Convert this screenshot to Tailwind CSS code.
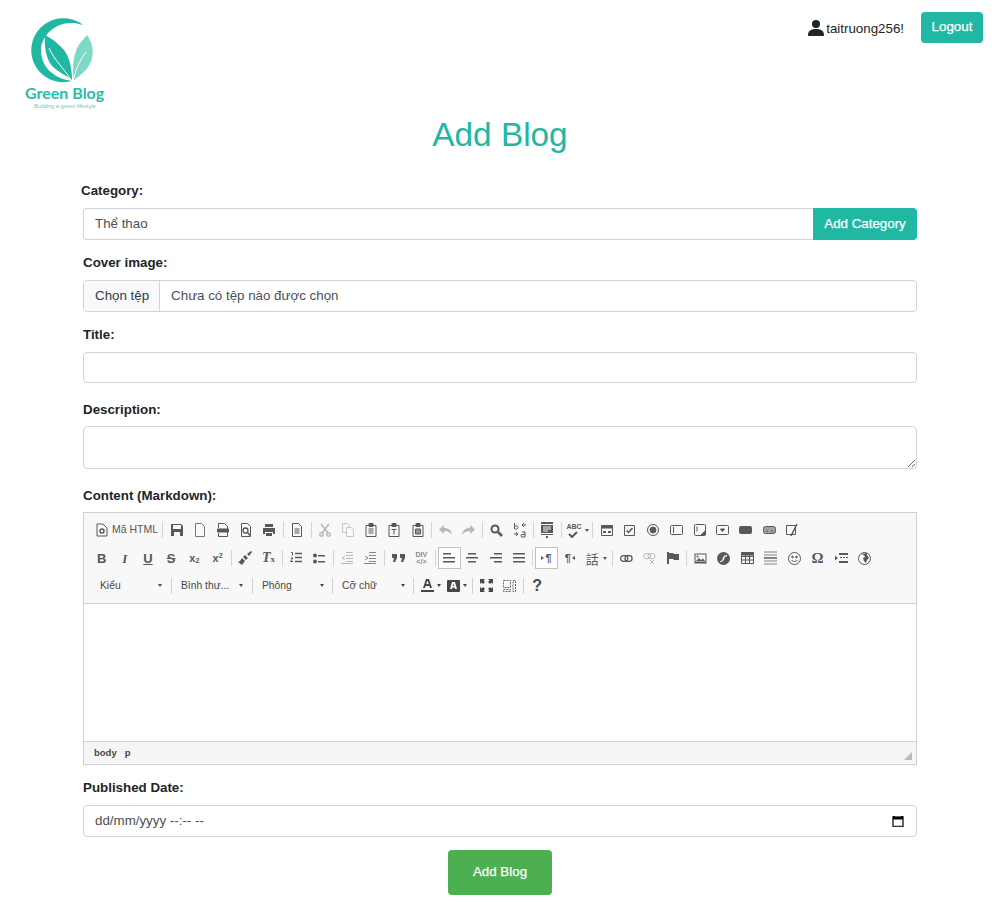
<!DOCTYPE html>
<html lang="vi">

<head>
    <meta charset="UTF-8" />
    <meta name="viewport" content="width=device-width, initial-scale=1.0" />
    <title>Add Blog</title>
    <script src="https://cdn.jsdelivr.net/npm/@tailwindcss/browser@4"></script>
</head>

<body class="bg-white text-[#212529] font-['Liberation_Sans',Arial,sans-serif] text-[13.33px]">
    <!-- header -->
    <header class="flex justify-between h-[112px]">
        <div class="ml-[25px] mt-[17px] w-[82px]">
            <svg width="80" height="68" viewBox="25 17 80 68" class="block">
                <path d="M83 25 A32 32 0 1 0 72 81 C52 78 41 66 41 50 C41 34 60 17 83 25Z" fill="#20b8a3" />
                <path d="M45 35 C51 38 58 43 64 50 C70 58 72 70 72 80 C66 75 58 72 52 66 C46 59 44 46 45 35Z" fill="#20b8a3" />
                <path d="M87 35 C92 42 94 50 92 58 C90 68 82 74 74 80 C72 70 73 56 78 46 C81 42 84 38 87 35Z" fill="#7ed8c8" />
                <path d="M49 48 C54 60 64 68 71 80" fill="none" stroke="#fff" stroke-width="1" />
                <path d="M86 52 C80 60 76 68 74 78" fill="none" stroke="#fff" stroke-width="1" />
            </svg>
            <div class="font-['Lato',sans-serif] font-bold text-[16px] leading-[18px] text-[#2bbca9] whitespace-nowrap -mt-[1px]">Green Blog</div>
            <div class="text-[5.7px] leading-[7px] text-[#5fcdbd] whitespace-nowrap ml-[9px] mt-[1px]">Building a green lifestyle</div>
        </div>
        <div class="flex items-start mr-[13px] mt-[12px]">
            <div class="flex items-center mt-[6px] mr-[17px]">
                <svg width="16" height="16" viewBox="0 0 16 16" fill="#212529">
                    <circle cx="8" cy="4" r="4" />
                    <path d="M0 15 C0 11 3 9 8 9 C13 9 16 11 16 15 C16 15.6 15.6 16 15 16 H1 C.4 16 0 15.6 0 15Z" />
                </svg>
                <span class="ml-[2px] mt-[1px]">taitruong256!</span>
            </div>
            <button class="bg-[#20b8a3] text-white [-webkit-text-stroke:0.25px_white] w-[62px] h-[31px] rounded-[4px] pb-[2px]">Logout</button>
        </div>
    </header>

    <h1 class="text-center text-[#20b8a3] text-[33.33px] leading-[40px] mt-[3px] pl-[4px]">Add Blog</h1>

    <form class="mx-[83px] w-[834px]" onsubmit="return false">
        <label class="block font-bold leading-[20px] mt-[26px] -ml-[2px]">Category:</label>
        <div class="flex mt-[7px] h-[32px]">
            <input value="Thể thao" readonly class="flex-1 border border-[#ced4da] border-r-0 rounded-l-[4px] px-[11px] text-[#495057] outline-none" />
            <button class="w-[104px] bg-[#20b8a3] text-white [-webkit-text-stroke:0.25px_white] rounded-r-[4px]">Add Category</button>
        </div>

        <label class="block font-bold leading-[20px] mt-[13px]">Cover image:</label>
        <div class="flex mt-[7px] h-[32px] border border-[#ced4da] rounded-[4px] overflow-hidden text-[#495057]">
            <span class="flex items-center pl-[11px] pr-[10px] bg-[#f8f9fa] border-r border-[#ced4da] text-[#343a40]">Chọn tệp</span>
            <span class="flex items-center px-[11px]">Chưa có tệp nào được chọn</span>
        </div>

        <label class="block font-bold leading-[20px] mt-[13px]">Title:</label>
        <input class="block w-full h-[31px] mt-[7px] border border-[#ced4da] rounded-[4px] outline-none" />

        <label class="block font-bold leading-[20px] mt-[17px]">Description:</label>
        <textarea class="block w-full h-[43px] mt-[6px] border border-[#ced4da] rounded-[4px] outline-none"></textarea>

        <label class="block font-bold leading-[20px] mt-[17px]">Content (Markdown):</label>

        <!-- editor -->
        <div class="mt-[6px] border border-[#d1d1d1] h-[253px] flex flex-col">
            <div class="h-[91px] bg-[#f8f8f8] border-b border-[#d1d1d1] pl-[6px] pt-[3px] text-[#474747]">
                <!-- row 1 -->
                <div class="flex items-center h-[28px] opacity-90">
                    <span class="w-[24px] flex justify-center"><svg width="12" height="14" viewBox="0 0 12 14" fill="none" stroke="#474747"><path d="M1 1h6l4 4v8H1z" /><circle cx="6" cy="8" r="2" stroke-width="1.5" /></svg></span>
                    <span class="w-[47px] text-[10.5px] text-[#474747] -ml-[2px] whitespace-nowrap">Mã HTML</span>
                    <i class="w-[1px] h-[16px] bg-[#d1d1d1] mx-[2px] ml-[3px]"></i>
                    <span class="w-[23.2px] flex justify-center"><svg width="14" height="14" viewBox="0 0 14 14" fill="#474747"><path d="M1 1h10l2 2v10H1zM3 2v4h8V2zM4 9v4h6V9z" fill-rule="evenodd" /></svg></span>
                    <span class="w-[23.2px] flex justify-center"><svg width="12" height="14" viewBox="0 0 12 14" fill="none" stroke="#666"><path d="M1.500 .5h6l3 3v10h-9z" /></svg></span>
                    <span class="w-[23.2px] flex justify-center"><svg width="12" height="14" viewBox="0 0 12 14" fill="none" stroke="#474747"><path d="M1.500 5V.5h6l3 3V13.500h-9V10" /><path d="M.5 6h11v3H.5z" fill="#474747" /></svg></span>
                    <span class="w-[23.2px] flex justify-center"><svg width="12" height="14" viewBox="0 0 12 14" fill="none" stroke="#474747"><path d="M1.500 .5h6l3 3v10h-9z" /><circle cx="5.500" cy="7.500" r="2.500" stroke-width="1.300" /><path d="M7.500 9.500l2.500 3" stroke-width="1.500" /></svg></span>
                    <span class="w-[23.2px] flex justify-center"><svg width="14" height="14" viewBox="0 0 14 14" fill="#474747"><path d="M3 1h8v3H3zM1 5h12v6h-2V9H3v2H1zM4 10h6v3H4z" /></svg></span>
                    <i class="w-[1px] h-[16px] bg-[#d1d1d1] mx-[1.8px]"></i>
                    <span class="w-[23.2px] flex justify-center"><svg width="12" height="14" viewBox="0 0 12 14" fill="none" stroke="#474747"><path d="M1.500 .5h6l3 3v10h-9zM3.500 6h5M3.500 8h5M3.500 10h5" /></svg></span>
                    <i class="w-[1px] h-[16px] bg-[#d1d1d1] mx-[1.8px]"></i>
                    <span class="w-[23.2px] flex justify-center opacity-40"><svg width="12" height="14" viewBox="0 0 12 14" fill="none" stroke="#474747" stroke-width="1.500"><path d="M2 1l7 9M10 1L3 10" /><circle cx="2.500" cy="11.500" r="1.700" /><circle cx="9.500" cy="11.500" r="1.700" /></svg></span>
                    <span class="w-[23.2px] flex justify-center opacity-30"><svg width="14" height="14" viewBox="0 0 14 14" fill="#fff" stroke="#474747"><path d="M1.500 .5h5l2 2v7h-7z" /><path d="M5.500 4.500h5l2 2v7h-7z" /></svg></span>
                    <span class="w-[23.2px] flex justify-center"><svg width="12" height="14" viewBox="0 0 12 14" fill="none" stroke="#474747"><path d="M1 2.500h10v11H1zM3.500 6h5M3.500 8h5M3.500 10h5" /><path d="M4 .5h4v3H4z" fill="#474747" /></svg></span>
                    <span class="w-[23.2px] flex justify-center"><svg width="12" height="14" viewBox="0 0 12 14" fill="none" stroke="#474747"><path d="M1 2.500h10v11H1zM3.500 6.500h5M6 6.500v5" /><path d="M4 .5h4v3H4z" fill="#474747" /></svg></span>
                    <span class="w-[23.2px] flex justify-center"><svg width="12" height="14" viewBox="0 0 12 14" fill="none" stroke="#474747"><path d="M1 2.500h10v11H1z" /><path d="M3.500 6h5v5h-5z" fill="#888" /><path d="M4 .5h4v3H4z" fill="#474747" /></svg></span>
                    <i class="w-[1px] h-[16px] bg-[#d1d1d1] mx-[1.8px]"></i>
                    <span class="w-[23.2px] flex justify-center opacity-40"><svg width="13" height="10" viewBox="0 0 13 10" fill="#474747"><path d="M5 0v3c5 0 7 2 8 7-2-3-4-4-8-4v3L0 4.500z" /></svg></span>
                    <span class="w-[23.2px] flex justify-center opacity-40"><svg width="13" height="10" viewBox="0 0 13 10" fill="#474747"><path d="M8 0v3C3 3 1 5 0 10c2-3 4-4 8-4v3l5-4.500z" /></svg></span>
                    <i class="w-[1px] h-[16px] bg-[#d1d1d1] mx-[1.8px]"></i>
                    <span class="w-[23.2px] flex justify-center"><svg width="13" height="13" viewBox="0 0 13 13" fill="none" stroke="#474747"><circle cx="5" cy="5" r="3.500" stroke-width="2" /><path d="M8 8l4 4" stroke-width="2.500" /></svg></span>
                    <span class="w-[23.2px] flex justify-center"><svg width="14" height="16" viewBox="0 0 14 16" fill="none" stroke="#474747"><path d="M1.500 1v6M1.500 4.500c2-1.500 3.500-.5 3.500 1s-2 2.500-3.500 1M9 3h4M9 3l2-2M9 3l2 2M1 12h4M5 12l-2-2M5 12l-2 2M9 10h3v5h-3c-1.500 0-1.500-2.500 0-2.500h3" /></svg></span>
                    <i class="w-[1px] h-[16px] bg-[#d1d1d1] mx-[1.8px]"></i>
                    <span class="w-[23.2px] flex justify-center"><svg width="12" height="16" viewBox="0 0 12 16" fill="#474747"><path d="M0 0h12v2H0zM0 3h12v8H0zM0 12h12v1H0zM5 14h2v2H5z" /><path d="M2 5h8M2 7h8M2 9h5" stroke="#f8f8f8" /></svg></span>
                    <i class="w-[1px] h-[16px] bg-[#d1d1d1] mx-[1.8px]"></i>
                    <span class="w-[21px] flex justify-center items-center"><span class="text-[7px] font-bold leading-[8px] relative"><span class="relative -top-[3px]">ABC</span><svg width="10" height="7" viewBox="0 0 10 7" fill="none" stroke="#474747" stroke-width="2" class="absolute left-[2px] top-[5px]"><path d="M1 3l3 3 5-5" /></svg></span></span>
                    <i class="w-0 h-0 border-x-[2px] border-x-transparent border-t-[3px] border-t-[#474747] mr-[2px]"></i>
                    <i class="w-[1px] h-[16px] bg-[#d1d1d1] mx-[1.8px]"></i>
                    <span class="w-[23.2px] flex justify-center"><svg width="12" height="11" viewBox="0 0 12 11" fill="none" stroke="#474747"><path d="M.5.5h11v10H.5z" /><path d="M.5 1h11v2H.5z" fill="#474747" /><path d="M2 6h3v2H2zM7 6h3v2H7z" fill="#474747" stroke="none" /></svg></span>
                    <span class="w-[23.2px] flex justify-center"><svg width="11" height="11" viewBox="0 0 11 11" fill="none" stroke="#474747"><path d="M.5.5h10v10H.5z" /><path d="M2.500 5.500l2 2 4-4.500" stroke-width="1.500" /></svg></span>
                    <span class="w-[23.2px] flex justify-center"><svg width="12" height="12" viewBox="0 0 12 12" fill="none" stroke="#474747"><circle cx="6" cy="6" r="5.500" /><circle cx="6" cy="6" r="3" fill="#474747" /></svg></span>
                    <span class="w-[23.2px] flex justify-center"><svg width="13" height="10" viewBox="0 0 13 10" fill="none" stroke="#474747"><rect x=".5" y=".5" width="12" height="9" rx="1" /><path d="M3.500 2v6" /></svg></span>
                    <span class="w-[23.2px] flex justify-center"><svg width="12" height="12" viewBox="0 0 12 12" fill="none" stroke="#474747"><rect x=".5" y=".5" width="11" height="11" rx="1" /><path d="M3 2.500v5" /><path d="M11 7v4H7z" fill="#474747" /></svg></span>
                    <span class="w-[23.2px] flex justify-center"><svg width="13" height="10" viewBox="0 0 13 10" fill="none" stroke="#474747"><rect x=".5" y=".5" width="12" height="9" rx="1" /><path d="M4.500 4h4L6.500 6.500z" fill="#474747" /></svg></span>
                    <span class="w-[23.2px] flex justify-center"><svg width="13" height="8" viewBox="0 0 13 8" fill="#474747"><rect width="13" height="8" rx="2" /></svg></span>
                    <span class="w-[23.2px] flex justify-center"><svg width="13" height="8" viewBox="0 0 13 8" fill="none" stroke="#474747"><rect x=".5" y=".5" width="12" height="7" rx="2" fill="#999" /><path d="M3 5h2M8 5h2" /></svg></span>
                    <span class="w-[23.2px] flex justify-center"><svg width="13" height="14" viewBox="0 0 13 14" fill="none" stroke="#474747"><path d="M.5 2.500h9v9h-9z" /><path d="M5 13L11 1" stroke-width="1.500" /></svg></span>
                </div>
                <!-- row 2 -->
                <div class="flex items-center h-[28px] opacity-90">
                    <span class="w-[23.2px] text-center font-bold text-[13px] leading-none">B</span>
                    <span class="w-[23.2px] text-center italic font-bold text-[13px] leading-none font-['Liberation_Serif',serif]">I</span>
                    <span class="w-[23.2px] text-center font-bold text-[13px] leading-none underline">U</span>
                    <span class="w-[23.2px] text-center font-bold text-[13px] leading-none line-through">S</span>
                    <span class="w-[23.2px] text-center font-bold text-[11px] leading-none">x<sub class="text-[7px]">2</sub></span>
                    <span class="w-[23.2px] text-center font-bold text-[11px] leading-none">x<sup class="text-[7px]">2</sup></span>
                    <i class="w-[1px] h-[16px] bg-[#d1d1d1] mx-[1.8px]"></i>
                    <span class="w-[23.2px] flex justify-center"><svg width="14" height="14" viewBox="0 0 14 14" fill="#474747"><path d="M9 3l4-3 1 1-3 4zM7 4l3 3-2 2-3-3zM4 7l3 3-3 4-4-3 2-1z" /></svg></span>
                    <span class="w-[23.2px] text-center italic font-bold text-[14px] leading-none font-['Liberation_Serif',serif]">T<span class="text-[9px] not-italic">x</span></span>
                    <i class="w-[1px] h-[16px] bg-[#d1d1d1] mx-[1.8px]"></i>
                    <span class="w-[23.2px] flex justify-center"><svg width="12" height="12" viewBox="0 0 12 12" fill="none" stroke="#474747"><path d="M5 1.500h7M5 5.500h7M5 9.500h7" stroke-width="1.500" /><path d="M1 .5h1.500v3M.5 6h2.500L.5 9.500H3" /></svg></span>
                    <span class="w-[23.2px] flex justify-center"><svg width="12" height="11" viewBox="0 0 12 11" fill="#474747"><circle cx="2" cy="2.500" r="2" /><circle cx="2" cy="8.500" r="2" /><path d="M5 2h7v1.500H5zM5 8h7v1.500H5z" /></svg></span>
                    <i class="w-[1px] h-[16px] bg-[#d1d1d1] mx-[1.8px]"></i>
                    <span class="w-[23.2px] flex justify-center opacity-40"><svg width="12" height="12" viewBox="0 0 12 12" fill="none" stroke="#474747"><path d="M5 .5h7M5 3.500h7M5 6.500h7M5 9.500h7M0 11.500h12M4 4L1 6l3 2" /></svg></span>
                    <span class="w-[23.2px] flex justify-center opacity-70"><svg width="12" height="12" viewBox="0 0 12 12" fill="none" stroke="#474747"><path d="M5 .5h7M5 3.500h7M5 6.500h7M5 9.500h7M0 11.500h12M1 4l3 2-3 2" /></svg></span>
                    <i class="w-[1px] h-[16px] bg-[#d1d1d1] mx-[1.8px]"></i>
                    <span class="w-[23.2px] flex justify-center"><svg width="13" height="8" viewBox="0 0 13 8" fill="#474747"><path d="M0 0h5v4L3 8H1l1-4H0zM8 0h5v4l-2 4H9l1-4H8z" /></svg></span>
                    <span class="w-[23.2px] text-center font-bold text-[7px] leading-[7px] opacity-70">DIV<br />&lt;/&gt;</span>
                    <i class="w-[1px] h-[16px] bg-[#d1d1d1] mx-[1.8px]"></i>
                    <span class="w-[23.2px] h-[22px] flex items-center justify-center bg-white border border-[#bcbcbc]"><svg width="12" height="10" viewBox="0 0 12 10" fill="#474747"><path d="M0 0h8v1.500H0zM0 4h12v1.500H0zM0 8h12v1.500H0z" /></svg></span>
                    <span class="w-[23.2px] flex justify-center"><svg width="12" height="10" viewBox="0 0 12 10" fill="#474747"><path d="M2 0h8v1.500H2zM0 4h12v1.500H0zM2 8h8v1.500H2z" /></svg></span>
                    <span class="w-[23.2px] flex justify-center"><svg width="12" height="10" viewBox="0 0 12 10" fill="#474747"><path d="M4 0h8v1.500H4zM0 4h12v1.500H0zM4 8h8v1.500H4z" /></svg></span>
                    <span class="w-[23.2px] flex justify-center"><svg width="12" height="10" viewBox="0 0 12 10" fill="#474747"><path d="M0 0h12v1.500H0zM0 4h12v1.500H0zM0 8h12v1.500H0z" /></svg></span>
                    <i class="w-[1px] h-[16px] bg-[#d1d1d1] mx-[1.8px]"></i>
                    <span class="w-[23.2px] h-[22px] flex items-center justify-center bg-white border border-[#bcbcbc] text-[11px] font-bold leading-none"><i class="w-0 h-0 border-y-[2px] border-y-transparent border-l-[3px] border-l-[#474747] mr-[1px]"></i>¶</span>
                    <span class="w-[23.2px] flex items-center justify-center text-[11px] font-bold leading-none">¶<i class="w-0 h-0 border-y-[2px] border-y-transparent border-r-[3px] border-r-[#474747] ml-[1px]"></i></span>
                    <span class="w-[22px] text-center text-[13px] leading-none font-['Noto_Sans_CJK_TC',sans-serif]">話</span>
                    <i class="w-0 h-0 border-x-[2px] border-x-transparent border-t-[3px] border-t-[#474747] mr-[3px]"></i>
                    <i class="w-[1px] h-[16px] bg-[#d1d1d1] mx-[1.8px]"></i>
                    <span class="w-[23.2px] flex justify-center"><svg width="13" height="7" viewBox="0 0 13 7" fill="none" stroke="#474747" stroke-width="1.300"><rect x=".7" y=".7" width="7" height="5.600" rx="2.500" /><rect x="5" y=".7" width="7" height="5.600" rx="2.500" /></svg></span>
                    <span class="w-[23.2px] flex justify-center opacity-40"><svg width="13" height="11" viewBox="0 0 13 11" fill="none" stroke="#474747"><rect x=".7" y=".7" width="7" height="5" rx="2.500" /><rect x="5" y=".7" width="7" height="5" rx="2.500" /><path d="M7 7l4 4M11 7l-4 4" /></svg></span>
                    <span class="w-[23.2px] flex justify-center"><svg width="12" height="12" viewBox="0 0 12 12" fill="#474747"><path d="M0 0h2v12H0zM2 1h4l1 1h5v6H7L6 7H2z" /></svg></span>
                    <i class="w-[1px] h-[16px] bg-[#d1d1d1] mx-[1.8px]"></i>
                    <span class="w-[23.2px] flex justify-center"><svg width="13" height="11" viewBox="0 0 13 11" fill="#474747"><path d="M.5.500h12v10H.5zM1.500 1.500v7h10v-7z" fill-rule="evenodd" /><path d="M2 8l3-3 2 2 2-1.500L11 8z" /><circle cx="3.500" cy="3.500" r="1" /></svg></span>
                    <span class="w-[23.2px] flex justify-center"><svg width="13" height="13" viewBox="0 0 13 13" fill="#474747"><circle cx="6.500" cy="6.500" r="6.500" /><path d="M10 3C7 3 6 5 5.500 7S4 9 3 9v1c3 0 4-2 4.500-4S9 4.500 10 4.500z" fill="#f8f8f8" /></svg></span>
                    <span class="w-[23.2px] flex justify-center"><svg width="13" height="12" viewBox="0 0 13 12" fill="none" stroke="#474747"><path d="M.5.500h12v11H.5zM.5 4.500h12M.5 8h12M4.500 3v9M8.500 3v9" /><path d="M.5 1h12v2H.5z" fill="#474747" /></svg></span>
                    <span class="w-[23.6px] flex justify-center"><svg width="13" height="14" viewBox="0 0 13 14" fill="none" stroke="#777"><path d="M0 1h13M0 4h13M0 10h13M0 13h13" /><path d="M0 7h13" stroke-width="2" /></svg></span>
                    <span class="w-[23.6px] flex justify-center"><svg width="13" height="13" viewBox="0 0 13 13" fill="none" stroke="#474747"><circle cx="6.500" cy="6.500" r="6" /><path d="M3.500 8c1.500 2 4.500 2 6 0" /><circle cx="4.500" cy="5" r=".8" fill="#474747" /><circle cx="8.500" cy="5" r=".8" fill="#474747" /></svg></span>
                    <span class="w-[23.6px] text-center text-[15px] font-bold leading-none font-['Liberation_Serif',serif]">Ω</span>
                    <span class="w-[23.6px] flex justify-center"><svg width="13" height="10" viewBox="0 0 13 10" fill="#474747"><path d="M0 2.500L3 5 0 7.500zM4 0h9v2H4zM5 4h2v1H5zM8 4h2v1H8zM11 4h2v1h-2zM4 8h9v2H4z" /></svg></span>
                    <span class="w-[23.6px] flex justify-center"><svg width="13" height="13" viewBox="0 0 13 13" fill="none" stroke="#474747"><circle cx="6.500" cy="6.500" r="6" /><path d="M3 2l3 1 1 2-2 1 1 3 2 2 1-3 2-2-2-3V1z" fill="#474747" stroke="none" /></svg></span>
                </div>
                <!-- row 3 -->
                <div class="flex items-center h-[27px] text-[10.3px] text-[#474747]">
                    <span class="w-[81px] flex items-center pl-[10px] whitespace-nowrap">Kiểu<i class="w-0 h-0 border-x-[2px] border-x-transparent border-t-[3px] border-t-[#474747] ml-auto mr-[9px]"></i></span>
                    <i class="w-[1px] h-[16px] bg-[#d1d1d1]"></i>
                    <span class="w-[80px] flex items-center pl-[9px] whitespace-nowrap">Bình thư...<i class="w-0 h-0 border-x-[2px] border-x-transparent border-t-[3px] border-t-[#474747] ml-auto mr-[9px]"></i></span>
                    <i class="w-[1px] h-[16px] bg-[#d1d1d1]"></i>
                    <span class="w-[79px] flex items-center pl-[9px] whitespace-nowrap">Phông<i class="w-0 h-0 border-x-[2px] border-x-transparent border-t-[3px] border-t-[#474747] ml-auto mr-[8px]"></i></span>
                    <i class="w-[1px] h-[16px] bg-[#d1d1d1]"></i>
                    <span class="w-[80px] flex items-center pl-[9px] whitespace-nowrap">Cỡ chữ<i class="w-0 h-0 border-x-[2px] border-x-transparent border-t-[3px] border-t-[#474747] ml-auto mr-[8px]"></i></span>
                    <i class="w-[1px] h-[16px] bg-[#d1d1d1]"></i>
                    <span class="w-[20px] flex items-center justify-end"><svg width="13" height="14" viewBox="0 0 13 14" fill="#474747"><path d="M5 0h3l3 9H9l-.6-2H4.600L4 9H2zM5.200 5h2.600L6.500 1.500zM0 11h13v2H0z" fill-rule="evenodd" /></svg></span>
                    <i class="w-0 h-0 border-x-[2px] border-x-transparent border-t-[3px] border-t-[#474747] ml-[3px]"></i>
                    <span class="w-[19px] flex items-center justify-end"><svg width="13" height="12" viewBox="0 0 13 12" fill="#474747"><path d="M1 0h11a1 1 0 0 1 1 1v10a1 1 0 0 1-1 1H1a1 1 0 0 1-1-1V1a1 1 0 0 1 1-1zM5 2L3 9h2l.4-1.500h2.200L8 9h2L8 2zM5.800 6L6.500 3.500 7.200 6z" fill-rule="evenodd" /></svg></span>
                    <i class="w-0 h-0 border-x-[2px] border-x-transparent border-t-[3px] border-t-[#474747] ml-[3px] mr-[3px]"></i>
                    <i class="w-[1px] h-[16px] bg-[#d1d1d1] mx-[1.8px]"></i>
                    <span class="w-[23.2px] flex justify-center"><svg width="13" height="13" viewBox="0 0 13 13" fill="#474747"><path d="M0 0h5L3.500 1.500 5 3 3 5 1.500 3.500 0 5zM13 0v5l-1.500-1.500L10 5 8 3l1.500-1.500L8 0zM0 13V8l1.500 1.500L3 8l2 2-1.500 1.500L5 13zM13 13H8l1.500-1.500L8 10l2-2 1.500 1.500L13 8z" /></svg></span>
                    <span class="w-[23.2px] flex justify-center"><svg width="13" height="12" viewBox="0 0 13 12" fill="none" stroke="#666"><path d="M.5.500h7v7h-7zM.5 9.500h7v2h-7zM10 .500h2.500v11H10z" stroke-dasharray="2 1" /></svg></span>
                    <i class="w-[1px] h-[16px] bg-[#d1d1d1] mx-[1.8px]"></i>
                    <span class="w-[23.2px] text-center text-[16px] font-bold leading-none">?</span>
                </div>
            </div>
            <div class="flex-1 bg-white"></div>
            <div class="h-[23px] bg-[#f5f5f5] border-t border-[#d1d1d1] flex items-center pl-[10px] gap-[8px] text-[9.5px] font-bold text-[#474747] relative">
                <span>body</span><span>p</span>
                <svg width="8" height="8" viewBox="0 0 8 8" fill="#bbb" class="absolute right-[4px] bottom-[4px]"><path d="M8 0v8H0z" /></svg>
            </div>
        </div>

        <label class="block font-bold leading-[20px] mt-[13px]">Published Date:</label>
        <div class="flex items-center justify-between h-[32px] mt-[7px] border border-[#ced4da] rounded-[4px] pl-[11px] pr-[12px] text-[#495057]">
            <span>dd/mm/yyyy --:-- --</span>
            <svg width="12" height="12" viewBox="0 0 12 12" fill="none"><path d="M1 2h10v9.500H1z" stroke="#333" stroke-width="1.500" /><path d="M1 1h2v1h6V1h2v3.500H1z" fill="#000" /></svg>
        </div>

        <div class="flex justify-center mt-[13px]">
            <button class="w-[104px] h-[45px] bg-[#4caf50] text-white [-webkit-text-stroke:0.25px_white] rounded-[4px] pb-[2px]">Add Blog</button>
        </div>
    </form>
</body>

</html>
